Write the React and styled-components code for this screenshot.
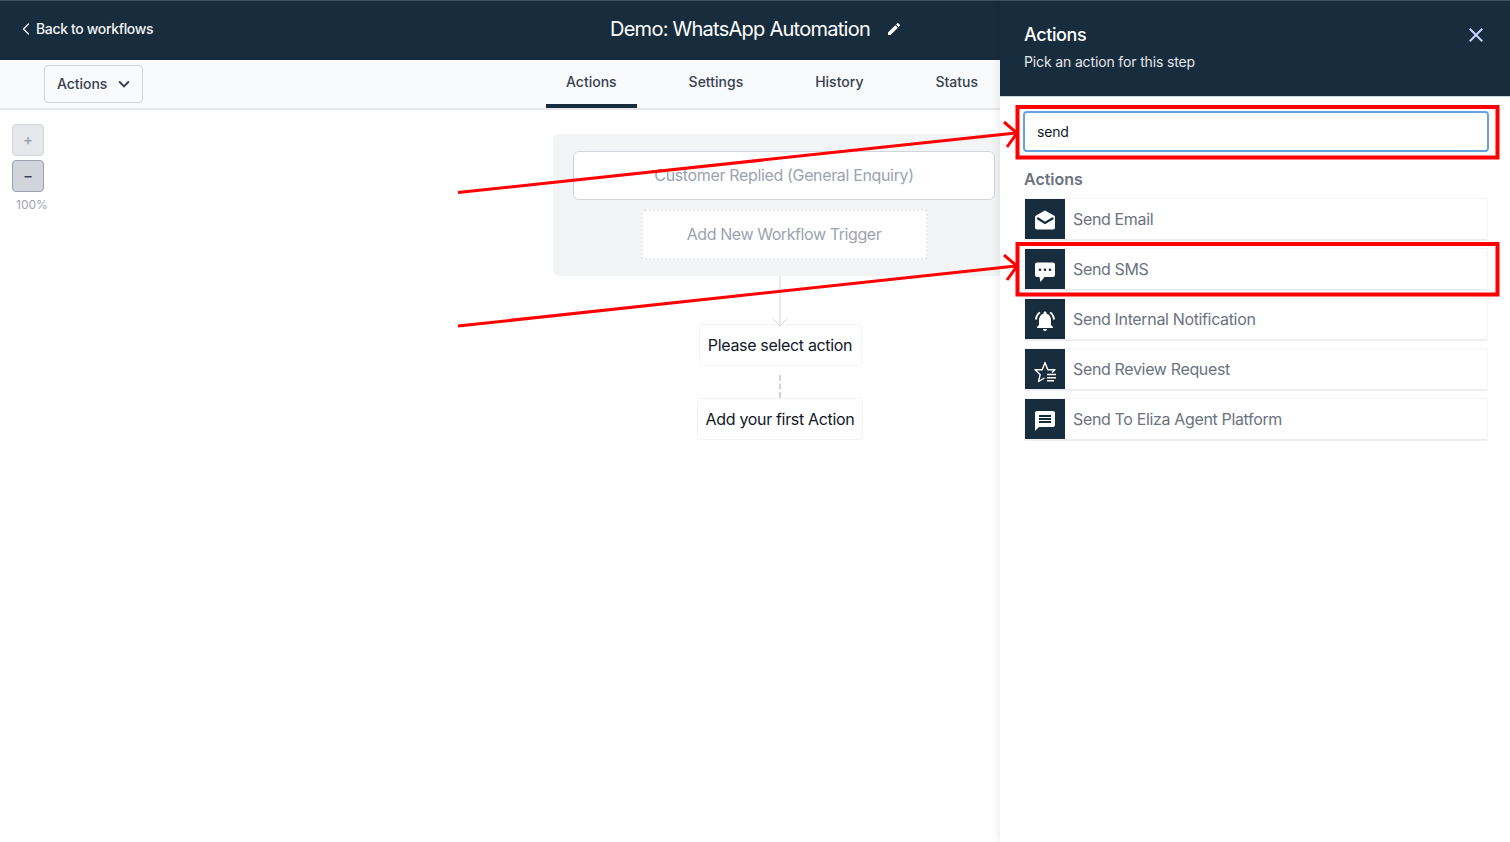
import styled, { createGlobalStyle } from "styled-components";
import { MdNotificationsActive, MdMessage, MdEdit, MdClose, MdKeyboardArrowDown } from "react-icons/md";
import { ChevronLeft } from "lucide-react";

const GlobalStyle = createGlobalStyle`
  html, body {
    margin: 0;
    padding: 0;
    background: #fff;
    font-family: Inter, "Noto Sans", sans-serif;
  }
  * { box-sizing: border-box; }
`;

const DARK = "#172c3d";

function MailIcon() {
  return (
    <svg width="24" height="24" viewBox="0 0 24 24">
      <path d="M12 1.500L21 6.500Q22 7.100 22 8.200V18.500Q22 20.500 20 20.500H4Q2 20.500 2 18.500V8.200Q2 7.100 3 6.500Z" fill="#fff" />
      <path d="M5 9.500L12 14L19.500 9.500" fill="none" stroke={DARK} strokeWidth="2.200" strokeLinecap="round" />
    </svg>
  );
}

function SmsIcon() {
  return (
    <svg width="24" height="24" viewBox="0 0 24 24">
      <path d="M4 3.500H20Q22 3.500 22 5.500V16Q22 18 20 18H11.500L7.500 23L6.500 18H4Q2 18 2 16V5.500Q2 3.500 4 3.500Z" fill="#fff" />
      <circle cx="7" cy="10.800" r="1.300" fill={DARK} />
      <circle cx="12" cy="10.800" r="1.300" fill={DARK} />
      <circle cx="17" cy="10.800" r="1.300" fill={DARK} />
    </svg>
  );
}

function ReviewIcon() {
  return (
    <svg width="24" height="24" viewBox="0 0 24 24" fill="none" stroke="#fff" strokeWidth="1.400" style={{ overflow: "visible" }}>
      <path d="M19 13.500L22 10.800H14.800L12 3.500L9.200 10.800H2L7.200 15.500L5.500 22.500L11.500 19" strokeLinejoin="round" />
      <path d="M14 15.500H23M14 18.700H23M14 21.800H21" />
    </svg>
  );
}

const actions = [
  { label: "Send Email", icon: <MailIcon /> },
  { label: "Send SMS", icon: <SmsIcon /> },
  { label: "Send Internal Notification", icon: <MdNotificationsActive size={24} /> },
  { label: "Send Review Request", icon: <ReviewIcon /> },
  { label: "Send To Eliza Agent Platform", icon: <MdMessage size={24} /> },
];

const tabs = ["Actions", "Settings", "History", "Status"];

function App() {
  return (
    <Page>
      <GlobalStyle />
      <Main>
        <TopBar>
          <BackLink>
            <ChevronLeft size={20} strokeWidth={1.6} />
            Back to workflows
          </BackLink>
          <Title>Demo: WhatsApp Automation</Title>
          <EditIcon><MdEdit size={16} /></EditIcon>
        </TopBar>
        <SubBar>
          <ActionsButton>
            <span>Actions</span>
            <MdKeyboardArrowDown size={22} />
          </ActionsButton>
          <Tabs>
            {tabs.map((t, i) => (
              <Tab key={t} $active={i === 0}>{t}</Tab>
            ))}
          </Tabs>
        </SubBar>
        <Canvas>
          <ZoomControls>
            <ZoomButton>+</ZoomButton>
            <ZoomButton $pressed>−</ZoomButton>
            <ZoomLabel>100%</ZoomLabel>
          </ZoomControls>
          <Flow>
            <TriggerPanel>
              <TriggerCard>Customer Replied (General Enquiry)</TriggerCard>
              <AddTrigger>Add New Workflow Trigger</AddTrigger>
            </TriggerPanel>
            <Connector>
              <svg width="18" height="51" viewBox="0 0 18 51" fill="none" stroke="#d1d5db">
                <path d="M9 0v50M1.500 42.500L9 50l7.500-7.500" />
              </svg>
            </Connector>
            <FlowNode $width={163}>Please select action</FlowNode>
            <DashLine />
            <FlowNode $width={166}>Add your first Action</FlowNode>
          </Flow>
        </Canvas>
      </Main>
      <Drawer>
        <DrawerHead>
          <div>
            <DrawerTitle>Actions</DrawerTitle>
            <DrawerSub>Pick an action for this step</DrawerSub>
          </div>
          <CloseBtn><MdClose size={24} /></CloseBtn>
        </DrawerHead>
        <DrawerBody>
          <SearchInput defaultValue="send" />
          <SectionLabel>Actions</SectionLabel>
          <ActionList>
            {actions.map((a) => (
              <ActionRow key={a.label}>
                <ActionIcon>{a.icon}</ActionIcon>
                <ActionText>{a.label}</ActionText>
              </ActionRow>
            ))}
          </ActionList>
        </DrawerBody>
      </Drawer>
      {/* red annotations painted on top of the screenshot */}
      <Annotations width="1510" height="842" viewBox="0 0 1510 842" fill="none" stroke="#ff0000" strokeWidth="3">
        <rect x="1017.500" y="107" width="480" height="50.500" strokeWidth="4" />
        <rect x="1017.500" y="244" width="480" height="50.500" strokeWidth="4" />
        <path d="M458 192.500L1016 133M1004 122l13 11-10 14" />
        <path d="M458 326L1016 266M1004 255l13 11-10 14" />
      </Annotations>
    </Page>
  );
}

const Page = styled.div`
  position: relative;
  width: 1510px;
  height: 842px;
  overflow: hidden;
  display: flex;
  background: #fff;
`;

const Main = styled.div`
  width: 1000px;
  flex: none;
  overflow: hidden;
`;

const TopBar = styled.header`
  height: 60px;
  background: ${DARK};
  border-top: 1px solid #3f5260;
  display: flex;
  align-items: center;
  padding-bottom: 4px;
  color: #fff;
`;

const BackLink = styled.div`
  flex: 0 0 610px;
  padding-left: 16px;
  display: flex;
  align-items: center;
  font-size: 14px;
  font-weight: 500;
  letter-spacing: -0.35px;
  color: #f3f4f6;
`;

const Title = styled.h1`
  margin: 0;
  font-size: 20px;
  line-height: 28px;
  font-weight: 400;
  letter-spacing: -0.74px;
  white-space: nowrap;
`;

const EditIcon = styled.span`
  display: flex;
  margin-left: 16px;
`;

const SubBar = styled.div`
  height: 50px;
  background: #f9fafb;
  border-bottom: 2px solid #e5e7eb;
  display: flex;
  justify-content: space-between;
  padding-left: 44px;
  padding-right: 2px;
`;

const ActionsButton = styled.div`
  width: 99px;
  height: 38px;
  margin-top: 5px;
  padding: 0 7px 0 12px;
  border: 1px solid #d1d5db;
  border-radius: 4px;
  background: #f9fafb;
  display: flex;
  align-items: center;
  justify-content: space-between;
  font-size: 14px;
  font-weight: 500;
  color: #374151;

  span {
    margin-bottom: 1px;
    letter-spacing: -0.05px;
  }
`;

const Tabs = styled.nav`
  display: flex;
  gap: 32px;
  height: 48px;
`;

const Tab = styled.div`
  padding: 13px 20px 0;
  font-size: 14px;
  line-height: 17px;
  font-weight: 500;
  color: #374151;
  border-bottom: 4px solid ${(p) => (p.$active ? DARK : "transparent")};
`;

const Canvas = styled.div`
  display: flex;
`;

const ZoomControls = styled.div`
  flex: 0 0 553px;
  padding: 14px 0 0 12px;
  display: flex;
  flex-direction: column;
  align-items: flex-start;
`;

const ZoomButton = styled.div`
  width: 32px;
  height: 32px;
  margin-bottom: 4px;
  padding-bottom: 2px;
  border-radius: 4px;
  border: 1px solid ${(p) => (p.$pressed ? "#9ca3af" : "#d1d5db")};
  background: ${(p) => (p.$pressed ? "#d1d5db" : "#e5e7eb")};
  color: ${(p) => (p.$pressed ? "#374151" : "#9ca3af")};
  display: flex;
  align-items: center;
  justify-content: center;
  font-size: 15px;
  font-weight: 500;
`;

const ZoomLabel = styled.div`
  margin: 1px 0 0 4px;
  font-size: 12px;
  line-height: 16px;
  color: #9ca3af;
`;

const Flow = styled.div`
  flex: 0 0 462px;
  padding-top: 24px;
  display: flex;
  flex-direction: column;
  align-items: center;
`;

const TriggerPanel = styled.div`
  width: 462px;
  height: 142px;
  padding: 17px 20px 0;
  background: #f3f4f6;
  border-radius: 6px;
  display: flex;
  flex-direction: column;
  align-items: center;
`;

const TriggerCard = styled.div`
  width: 100%;
  height: 49px;
  padding-bottom: 1px;
  background: #fff;
  border: 1px solid #d1d5db;
  border-radius: 6px;
  display: flex;
  align-items: center;
  justify-content: center;
  font-size: 16px;
  letter-spacing: -0.35px;
  color: #9ca3af;
`;

const AddTrigger = styled.div`
  width: 287px;
  height: 51px;
  margin-top: 9px;
  padding-bottom: 1px;
  background: #fff;
  border: 2px dotted #e5e7eb;
  border-radius: 4px;
  display: flex;
  align-items: center;
  justify-content: center;
  font-size: 16px;
  letter-spacing: -0.42px;
  color: #9ca3af;
`;

const Connector = styled.div`
  display: flex;
  height: 48px;
  margin-right: 8px;

  svg {
    flex: none;
    overflow: visible;
  }
`;

const FlowNode = styled.div`
  position: relative;
  width: ${(p) => p.$width}px;
  height: 42px;
  margin-right: 8px;
  padding-bottom: 1px;
  border: 1px dotted #e5e7eb;
  border-radius: 4px;
  display: flex;
  align-items: center;
  justify-content: center;
  font-size: 16px;
  letter-spacing: -0.33px;
  color: #111827;
  white-space: nowrap;
`;

const DashLine = styled.div`
  width: 0;
  height: 23px;
  margin: 9px 8px 0 0;
  border-left: 2px dashed #d1d5db;
`;

const Drawer = styled.aside`
  position: relative;
  z-index: 1;
  width: 510px;
  flex: none;
  background: #fff;
  box-shadow: -2px 0 8px rgba(0, 0, 0, 0.08);
`;

const DrawerHead = styled.div`
  height: 97px;
  padding: 22px 24px 0;
  background: ${DARK};
  border-top: 1px solid #3f5260;
  border-bottom: 1px solid #cbd5e1;
  display: flex;
  justify-content: space-between;
  align-items: flex-start;
`;

const DrawerTitle = styled.div`
  font-size: 18px;
  line-height: 24px;
  font-weight: 500;
  letter-spacing: -0.4px;
  color: #fff;
`;

const DrawerSub = styled.div`
  margin-top: 5px;
  font-size: 14px;
  line-height: 20px;
  letter-spacing: -0.14px;
  color: #e5e7eb;
`;

const CloseBtn = styled.div`
  display: flex;
  color: #c7d2fe;
  margin-right: -2px;
`;

const DrawerBody = styled.div`
  padding: 14px 22px 0 24px;
`;

const SearchInput = styled.input`
  display: block;
  width: calc(100% + 2px);
  height: 41px;
  margin-left: -1px;
  padding: 0 12px;
  border: 2px solid #63a4dc;
  border-radius: 4px;
  outline: none;
  font-family: inherit;
  font-size: 14px;
  letter-spacing: -0.2px;
  color: #111827;
`;

const SectionLabel = styled.div`
  margin-top: 17px;
  font-size: 16px;
  line-height: 20px;
  font-weight: 600;
  color: #6b7280;
`;

const ActionList = styled.div`
  margin-top: 9px;
  display: flex;
  flex-direction: column;
  gap: 7px;
`;

const ActionRow = styled.div`
  height: 43px;
  display: flex;
  align-items: center;
  border: 1px solid #f3f4f6;
  border-bottom: 2px solid #eceef1;
  border-radius: 2px;
  background: #fff;
`;

const ActionIcon = styled.div`
  flex: 0 0 40px;
  height: 40px;
  align-self: flex-start;
  padding-top: 3px;
  background: ${DARK};
  color: #fff;
  display: flex;
  align-items: center;
  justify-content: center;
`;

const ActionText = styled.div`
  margin-left: 8px;
  padding-bottom: 1px;
  font-size: 16px;
  letter-spacing: -0.35px;
  color: #6b7280;
`;

const Annotations = styled.svg`
  position: absolute;
  top: 0;
  left: 0;
  z-index: 2;
  pointer-events: none;
`;

export default App;
